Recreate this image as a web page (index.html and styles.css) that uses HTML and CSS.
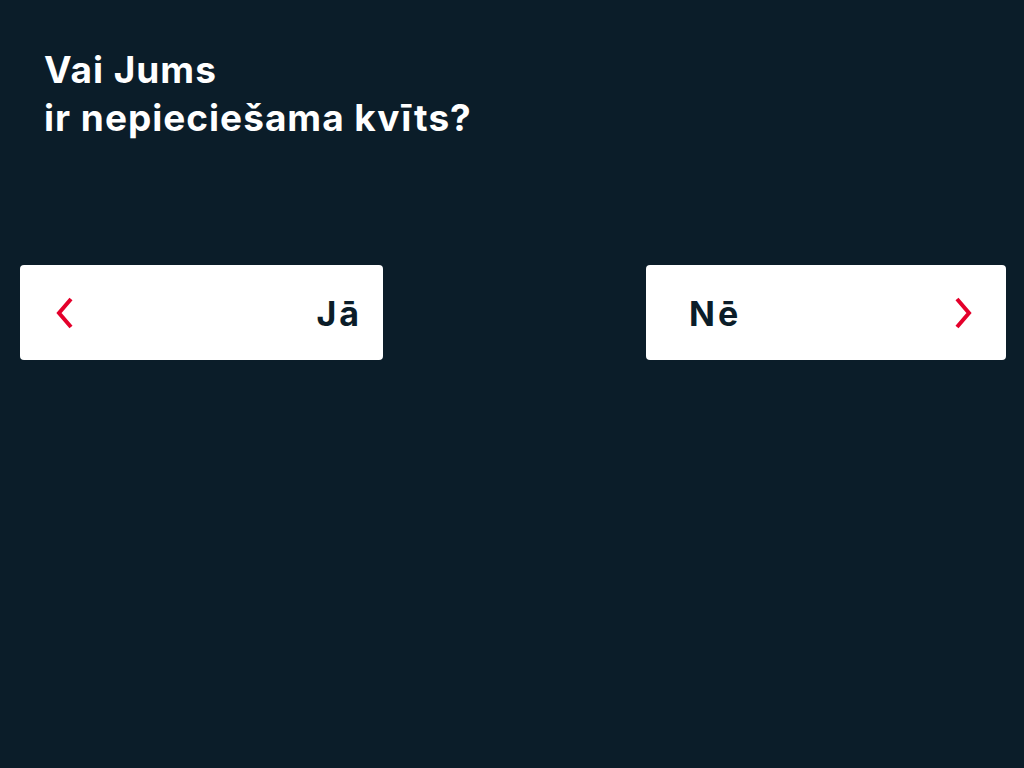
FILE: index.html
```html
<!DOCTYPE html>
<html lang="lv">
<head>
<meta charset="utf-8">
<link rel="stylesheet" href="styles.css">
</head>
<body>
<main class="screen">
  <h1 class="title">Vai Jums<br>ir nepieciešama kvīts?</h1>
  <div class="choices">
    <button class="choice choice-yes">
      <svg class="chev" width="20" height="32" viewBox="0 0 20 32"><polyline points="17,2 5,16 17,30" fill="none" stroke="#e4002b" stroke-width="4"/></svg>
      <span class="label">Jā</span>
    </button>
    <button class="choice choice-no">
      <span class="label">Nē</span>
      <svg class="chev" width="20" height="32" viewBox="0 0 20 32"><polyline points="3,2 15,16 3,30" fill="none" stroke="#e4002b" stroke-width="4"/></svg>
    </button>
  </div>
</main>
</body>
</html>
```
FILE: styles.css
```css
html, body {
  margin: 0;
  padding: 0;
  background: #0b1d29;
}
.screen {
  width: 1024px;
  height: 768px;
  box-sizing: border-box;
  padding-top: 46px;
  font-family: Inter, "Liberation Sans", Arial, sans-serif;
}
.title {
  margin: 0 0 0 44px;
  color: #ffffff;
  font-size: 37px;
  line-height: 48px;
  font-weight: 700;
  letter-spacing: 1px;
}
.choices {
  display: flex;
  justify-content: space-between;
  padding: 0 18px 0 20px;
  margin-top: 123px;
}
.choice {
  display: flex;
  align-items: center;
  justify-content: space-between;
  height: 95px;
  border: none;
  border-radius: 4px;
  background: #ffffff;
  font-family: Inter, "Liberation Sans", Arial, sans-serif;
  font-size: 34px;
  font-weight: 700;
  letter-spacing: 3px;
  color: #0b1d29;
  cursor: pointer;
}
.choice-yes {
  width: 363px;
  padding: 0 21px 0 34px;
}
.choice-no {
  width: 360px;
  padding: 0 32px 0 43px;
}
.chev {
  display: block;
}
.label {
  line-height: 1;
  padding-top: 3px;
}
```
